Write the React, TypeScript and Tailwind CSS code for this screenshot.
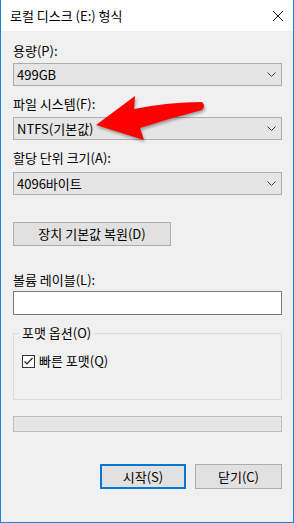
import { ReactNode } from 'react';

const font = { fontFamily: '"Noto Sans CJK KR", "Noto Sans", sans-serif' };

function Chevron() {
  return (
    <svg width="9" height="5" viewBox="0 0 9 5" className="shrink-0">
      <path d="M0.5 0.5 L4.5 4.5 L8.5 0.5" fill="none" stroke="#404040" strokeWidth="1" />
    </svg>
  );
}

function Combo({ value, className = '' }: { value: string; className?: string }) {
  return (
    <div
      className={`flex h-[23px] items-center justify-between border border-[#adadad] bg-[#e5e5e5] pl-[3px] pr-[5px] ${className}`}
    >
      <span className="text-[13px] leading-4 text-black">{value}</span>
      <Chevron />
    </div>
  );
}

function Label({ children, className = '' }: { children: ReactNode; className?: string }) {
  return <div className={`h-4 text-[13px] leading-4 text-black ${className}`}>{children}</div>;
}

function Button({
  children,
  primary,
  className = '',
}: {
  children: ReactNode;
  primary?: boolean;
  className?: string;
}) {
  return (
    <div
      className={`flex items-center justify-center bg-[#e1e1e1] text-[13px] leading-4 text-black ${
        primary ? 'border-2 border-[#0078d7]' : 'border border-[#adadad]'
      } ${className}`}
    >
      {children}
    </div>
  );
}

export default function App() {
  return (
    <div
      style={font}
      className="relative flex h-[523px] w-[294px] flex-col overflow-hidden border-x border-b border-[#1883d7] bg-[#f0f0f0]"
    >
      {/* Title bar */}
      <div className="flex h-[31px] shrink-0 items-center justify-between bg-white pl-[9px] pr-[10px]">
        <span className="text-[13px] leading-4 text-black">로컬 디스크 (E:) 형식</span>
        <svg width="10" height="10" viewBox="0 0 10 10">
          <path d="M0 0 L10 10 M10 0 L0 10" stroke="#111" strokeWidth="1" />
        </svg>
      </div>

      {/* Content */}
      <div className="flex flex-col pl-3 pr-[11px] pt-3">
        <Label>용량(P):</Label>
        <Combo value="499GB" className="mt-1" />

        <Label className="mt-[10px]">파일 시스템(F):</Label>
        <Combo value="NTFS(기본값)" className="mt-[5px]" />

        <Label className="mt-[10px]">할당 단위 크기(A):</Label>
        <Combo value="4096바이트" className="mt-[6px]" />

        <Button className="mt-[27px] h-[24px] w-[158px]">장치 기본값 복원(D)</Button>

        <Label className="mt-[26px]">볼륨 레이블(L):</Label>
        <div className="mt-[3px] h-[24px] border border-[#7a7a7a] bg-white" />

        {/* Format options group */}
        <div className="relative mt-[18px] h-[67px] border border-[#dcdcdc]">
          <span className="absolute left-[5px] top-[-9px] bg-[#f0f0f0] px-[3px] text-[13px] leading-4 text-black">
            포맷 옵션(O)
          </span>
          <div className="ml-[8px] mt-[19px] flex items-center gap-[4px]">
            <div className="flex h-[13px] w-[13px] items-center justify-center border border-[#333] bg-white">
              <svg width="11" height="11" viewBox="0 0 11 11">
                <path d="M1.5 5.5 L4 8 L9.5 2" fill="none" stroke="#222" strokeWidth="1.2" />
              </svg>
            </div>
            <span className="text-[13px] leading-4 text-black">빠른 포맷(Q)</span>
          </div>
        </div>

        {/* Progress bar */}
        <div className="mt-[16px] h-[16px] border border-[#bcbcbc] bg-[#e6e6e6]" />

        {/* Bottom buttons */}
        <div className="mt-[32px] flex justify-end gap-[9px]">
          <Button primary className="h-[25px] w-[86px]">
            시작(S)
          </Button>
          <Button className="h-[25px] w-[87px]">닫기(C)</Button>
        </div>
      </div>

      {/* Red annotation arrow */}
      <svg
        className="pointer-events-none absolute left-0 top-0"
        width="294"
        height="523"
        viewBox="0 0 294 523"
        style={{ filter: 'drop-shadow(1px 2px 1.5px rgba(0,0,0,0.35))' }}
      >
        <path
          d="M95 125 L134 96 L133 109 Q168 102 201 102 Q205 106 201 110 Q170 118 139 128 L143 140 Z"
          fill="#ff0000"
        />
      </svg>
    </div>
  );
}
